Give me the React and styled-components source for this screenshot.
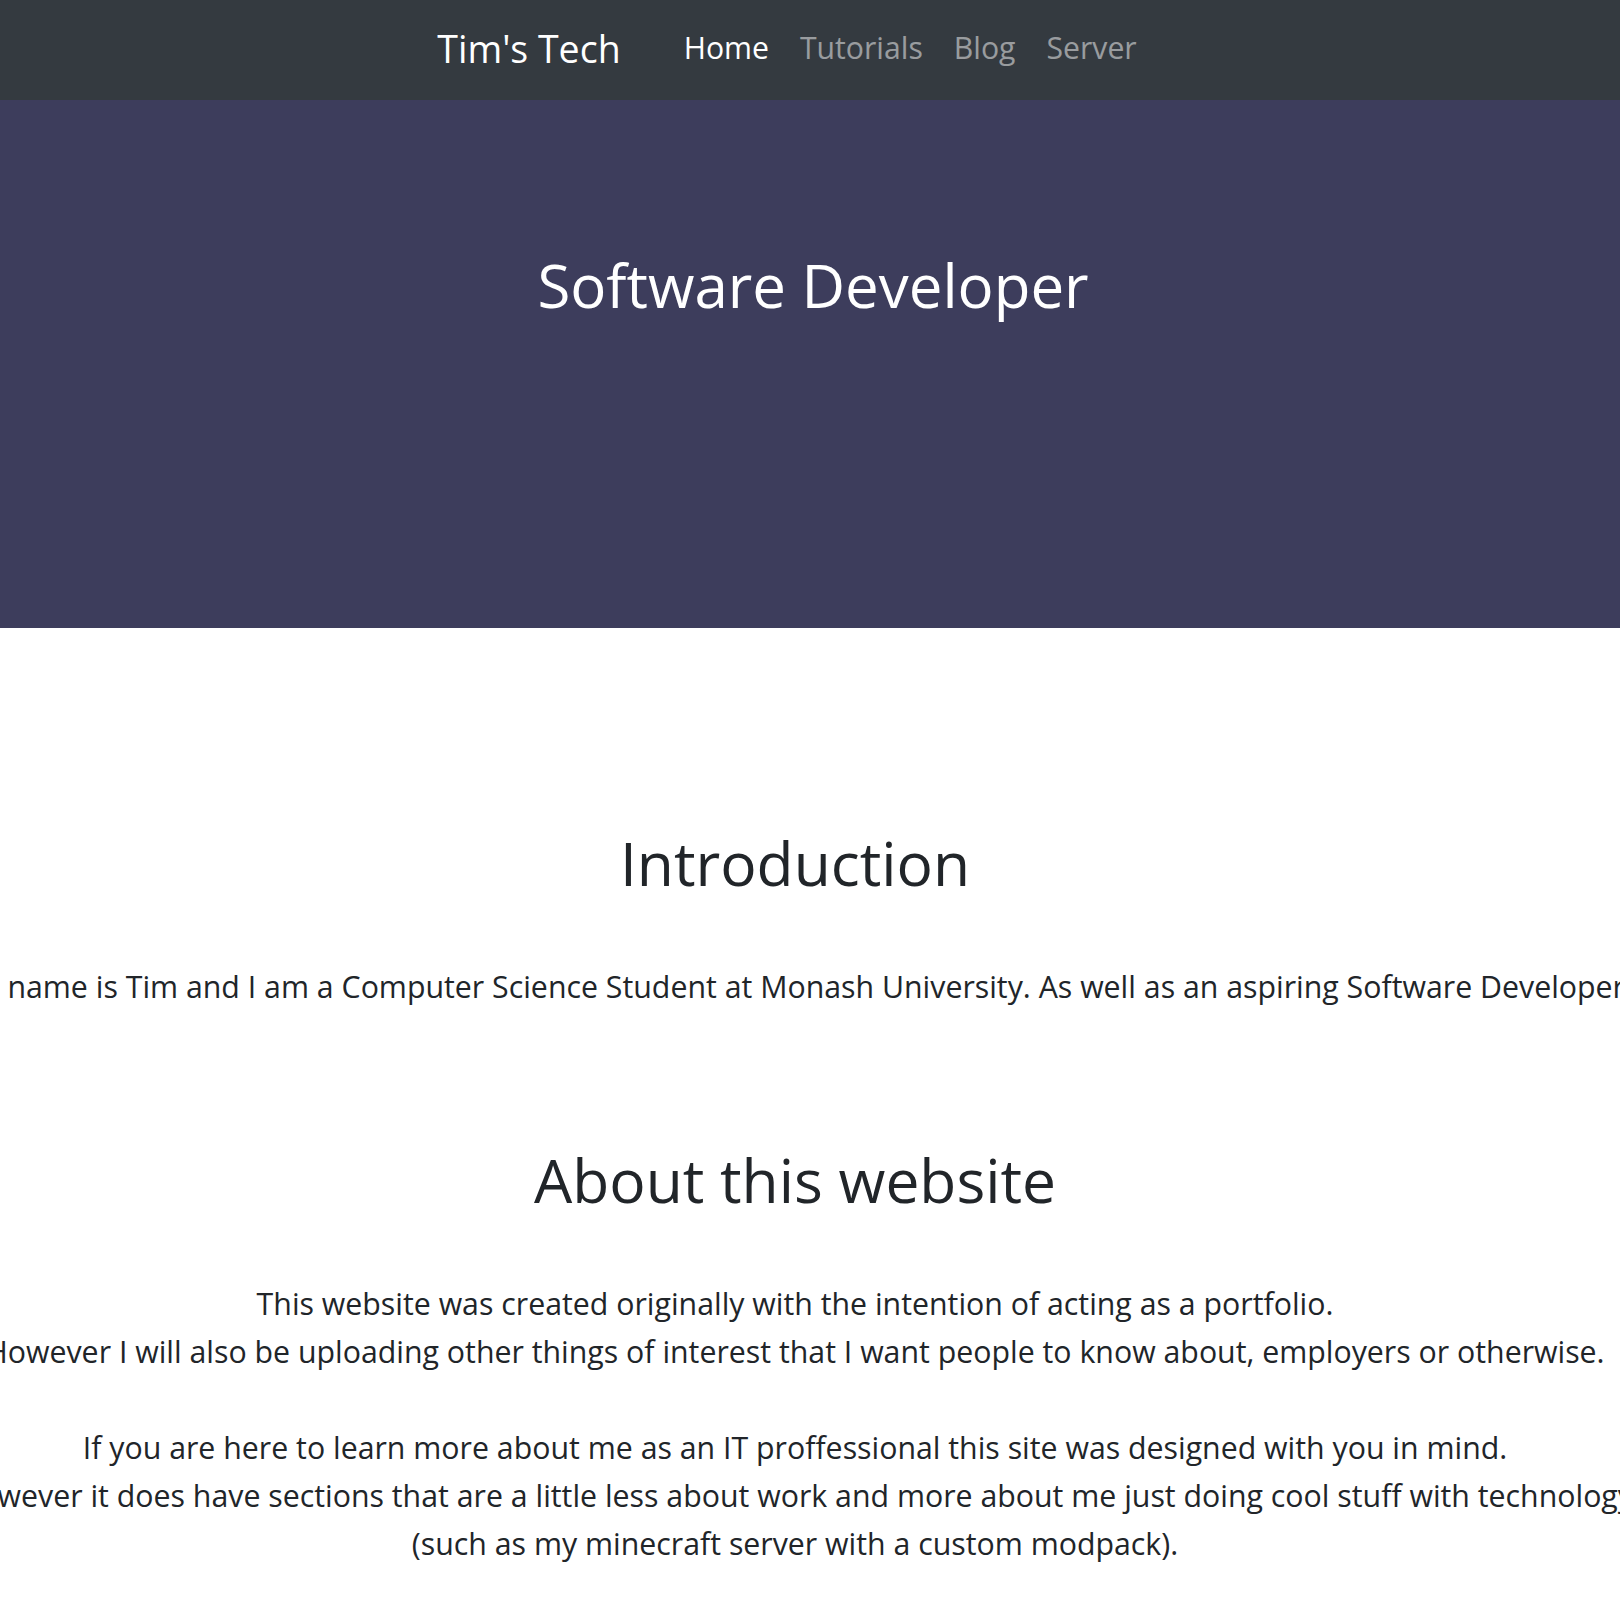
import React from "react";
import styled, { createGlobalStyle } from "styled-components";

const GlobalStyle = createGlobalStyle`
  html, body {
    margin: 0;
    padding: 0;
    overflow-x: hidden;
    background: #ffffff;
  }
  body {
    font-family: "Open Sans", "Noto Sans", "Liberation Sans", sans-serif;
    color: #212529;
  }
  * { box-sizing: border-box; }
`;

const Navbar = styled.nav`
  height: 100px;
  background: #343a40;
  display: flex;
  align-items: center;
  justify-content: center;
  padding: 0 46px 3px 0;
`;

const Brand = styled.a`
  font-size: 37.5px;
  color: #ffffff;
  text-decoration: none;
  margin-right: 63px;
  line-height: 1;
  white-space: nowrap;
`;

const NavList = styled.ul`
  display: flex;
  gap: 31px;
  list-style: none;
  margin: 0;
  padding: 0;
`;

const NavLink = styled.a`
  font-size: 30.2px;
  line-height: 1;
  text-decoration: none;
  white-space: nowrap;
  color: ${(p) => (p.$active ? "#ffffff" : "rgba(255,255,255,0.5)")};
`;

const Hero = styled.header`
  height: 528px;
  background: #3d3d5c;
  display: flex;
  justify-content: center;
  padding: 149px 0 0 6px;
`;

const HeroTitle = styled.h1`
  margin: 0;
  font-size: 60px;
  font-weight: 400;
  line-height: 72px;
  color: #ffffff;
  white-space: nowrap;
`;

const Content = styled.main`
  padding: 199px 30px 32px 0;
  display: flex;
  flex-direction: column;
  align-items: center;
  gap: 133px;
`;

const Section = styled.section`
  display: flex;
  flex-direction: column;
  align-items: center;
`;

const Heading = styled.h2`
  margin: 0 0 64px;
  font-size: 60.5px;
  font-weight: 400;
  line-height: 72px;
  color: #212529;
  white-space: nowrap;
`;

const Paragraph = styled.p`
  margin: 0;
  display: flex;
  flex-direction: column;
  align-items: center;
  font-size: 30.3px;
  line-height: 48px;
  & + & {
    margin-top: 48px;
  }
`;

const Line = styled.span`
  white-space: nowrap;
  text-align: center;
`;

const links = [
  { label: "Home", active: true },
  { label: "Tutorials" },
  { label: "Blog" },
  { label: "Server" },
];

export default function App() {
  return (
    <>
      <GlobalStyle />
      <Navbar>
        <Brand href="#">Tim's Tech</Brand>
        <NavList>
          {links.map((l) => (
            <li key={l.label}>
              <NavLink href="#" $active={l.active}>
                {l.label}
              </NavLink>
            </li>
          ))}
        </NavList>
      </Navbar>
      <Hero>
        <HeroTitle>Software Developer</HeroTitle>
      </Hero>
      <Content>
        <Section>
          <Heading>Introduction</Heading>
          <Paragraph>
            <Line>
              My name is Tim and I am a Computer Science Student at Monash University. As well as an aspiring Software Developer.
            </Line>
          </Paragraph>
        </Section>
        <Section>
          <Heading>About this website</Heading>
          <Paragraph>
            <Line>This website was created originally with the intention of acting as a portfolio.</Line>
            <Line>However I will also be uploading other things of interest that I want people to know about, employers or otherwise.</Line>
          </Paragraph>
          <Paragraph>
            <Line>If you are here to learn more about me as an IT proffessional this site was designed with you in mind.</Line>
            <Line>However it does have sections that are a little less about work and more about me just doing cool stuff with technology</Line>
            <Line>(such as my minecraft server with a custom modpack).</Line>
          </Paragraph>
        </Section>
      </Content>
    </>
  );
}
